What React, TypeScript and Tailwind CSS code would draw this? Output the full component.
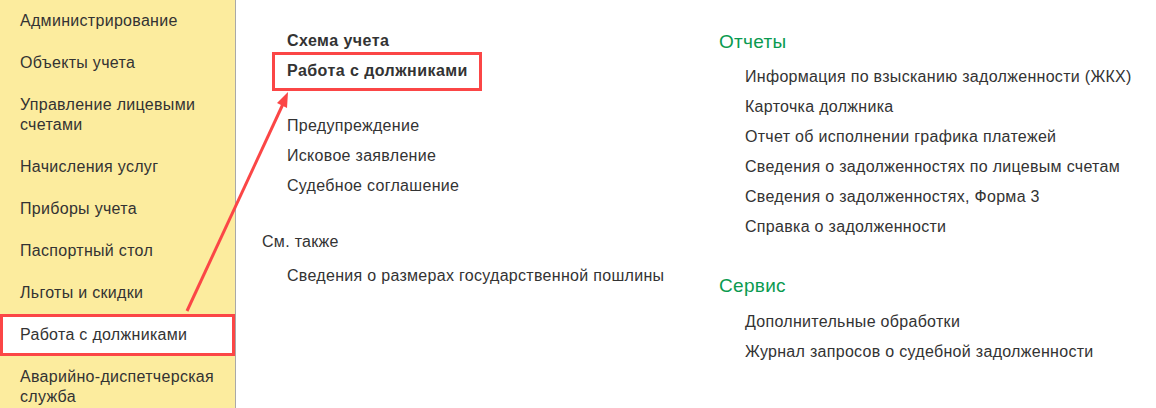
import React from "react";

const SIDEBAR = [
  "Администрирование",
  "Объекты учета",
  "Управление лицевыми счетами",
  "Начисления услуг",
  "Приборы учета",
  "Паспортный стол",
  "Льготы и скидки",
  "Работа с должниками",
  "Аварийно-диспетчерская служба",
];

const ACTIVE = "Работа с должниками";

const REPORTS = [
  "Информация по взысканию задолженности (ЖКХ)",
  "Карточка должника",
  "Отчет об исполнении графика платежей",
  "Сведения о задолженностях по лицевым счетам",
  "Сведения о задолженностях, Форма 3",
  "Справка о задолженности",
];

const SERVICE = ["Дополнительные обработки", "Журнал запросов о судебной задолженности"];

function Sidebar() {
  return (
    <aside className="w-[236px] shrink-0 border-r border-[#a9a9a9] bg-[#fcec9e]">
      {SIDEBAR.map((item) =>
        item === ACTIVE ? (
          <div
            key={item}
            className="border-[3px] border-[#fb4646] bg-white py-[8px] pl-[17px] pr-[6px] leading-[20px]"
          >
            {item}
          </div>
        ) : (
          <div key={item} className="py-[11px] pl-[20px] pr-[6px] leading-[20px]">
            {item}
          </div>
        ),
      )}
    </aside>
  );
}

function Arrow() {
  return (
    <svg className="pointer-events-none absolute left-0 top-0" width="1156" height="408">
      <line x1="187" y1="311" x2="283" y2="104" stroke="#fb4646" strokeWidth="3" />
      <polygon points="288,92 287,108 277,103" fill="#fb4646" />
    </svg>
  );
}

function App() {
  return (
    <div
      className="relative flex h-[408px] w-[1156px] overflow-hidden bg-white text-[16px] tracking-[0.3px] text-[#333]"
      style={{ fontFamily: '"Liberation Sans", Arial, sans-serif' }}
    >
      <Sidebar />

      <main className="flex pl-[26px]">
        {/* Left column */}
        <div className="w-[457px] pt-[26px] leading-[30px]">
          <div className="pl-[25px] font-bold tracking-[0.45px]">Схема учета</div>
          <div className="pl-[25px] font-bold tracking-[0.45px]">
            <span className="relative inline-block">
              Работа с должниками
              <span className="absolute -bottom-[5px] -left-[15px] -right-[14px] -top-[4px] border-[3px] border-[#fb4646]" />
            </span>
          </div>
          <div className="mt-[25px] pl-[25px]">
            <div>Предупреждение</div>
            <div>Исковое заявление</div>
            <div>Судебное соглашение</div>
          </div>
          <div className="mt-[26px]">См. также</div>
          <div className="mt-[4px] pl-[25px]">Сведения о размерах государственной пошлины</div>
        </div>

        {/* Right column */}
        <div className="pt-[27px] leading-[30px]">
          <div className="text-[19px] text-[#0a9a50]">Отчеты</div>
          <div className="mt-[5px] pl-[26px]">
            {REPORTS.map((r) => (
              <div key={r}>{r}</div>
            ))}
          </div>
          <div className="mt-[29px] text-[19px] text-[#0a9a50]">Сервис</div>
          <div className="mt-[6px] pl-[26px]">
            {SERVICE.map((r) => (
              <div key={r}>{r}</div>
            ))}
          </div>
        </div>
      </main>

      <Arrow />
    </div>
  );
}

export default App;
